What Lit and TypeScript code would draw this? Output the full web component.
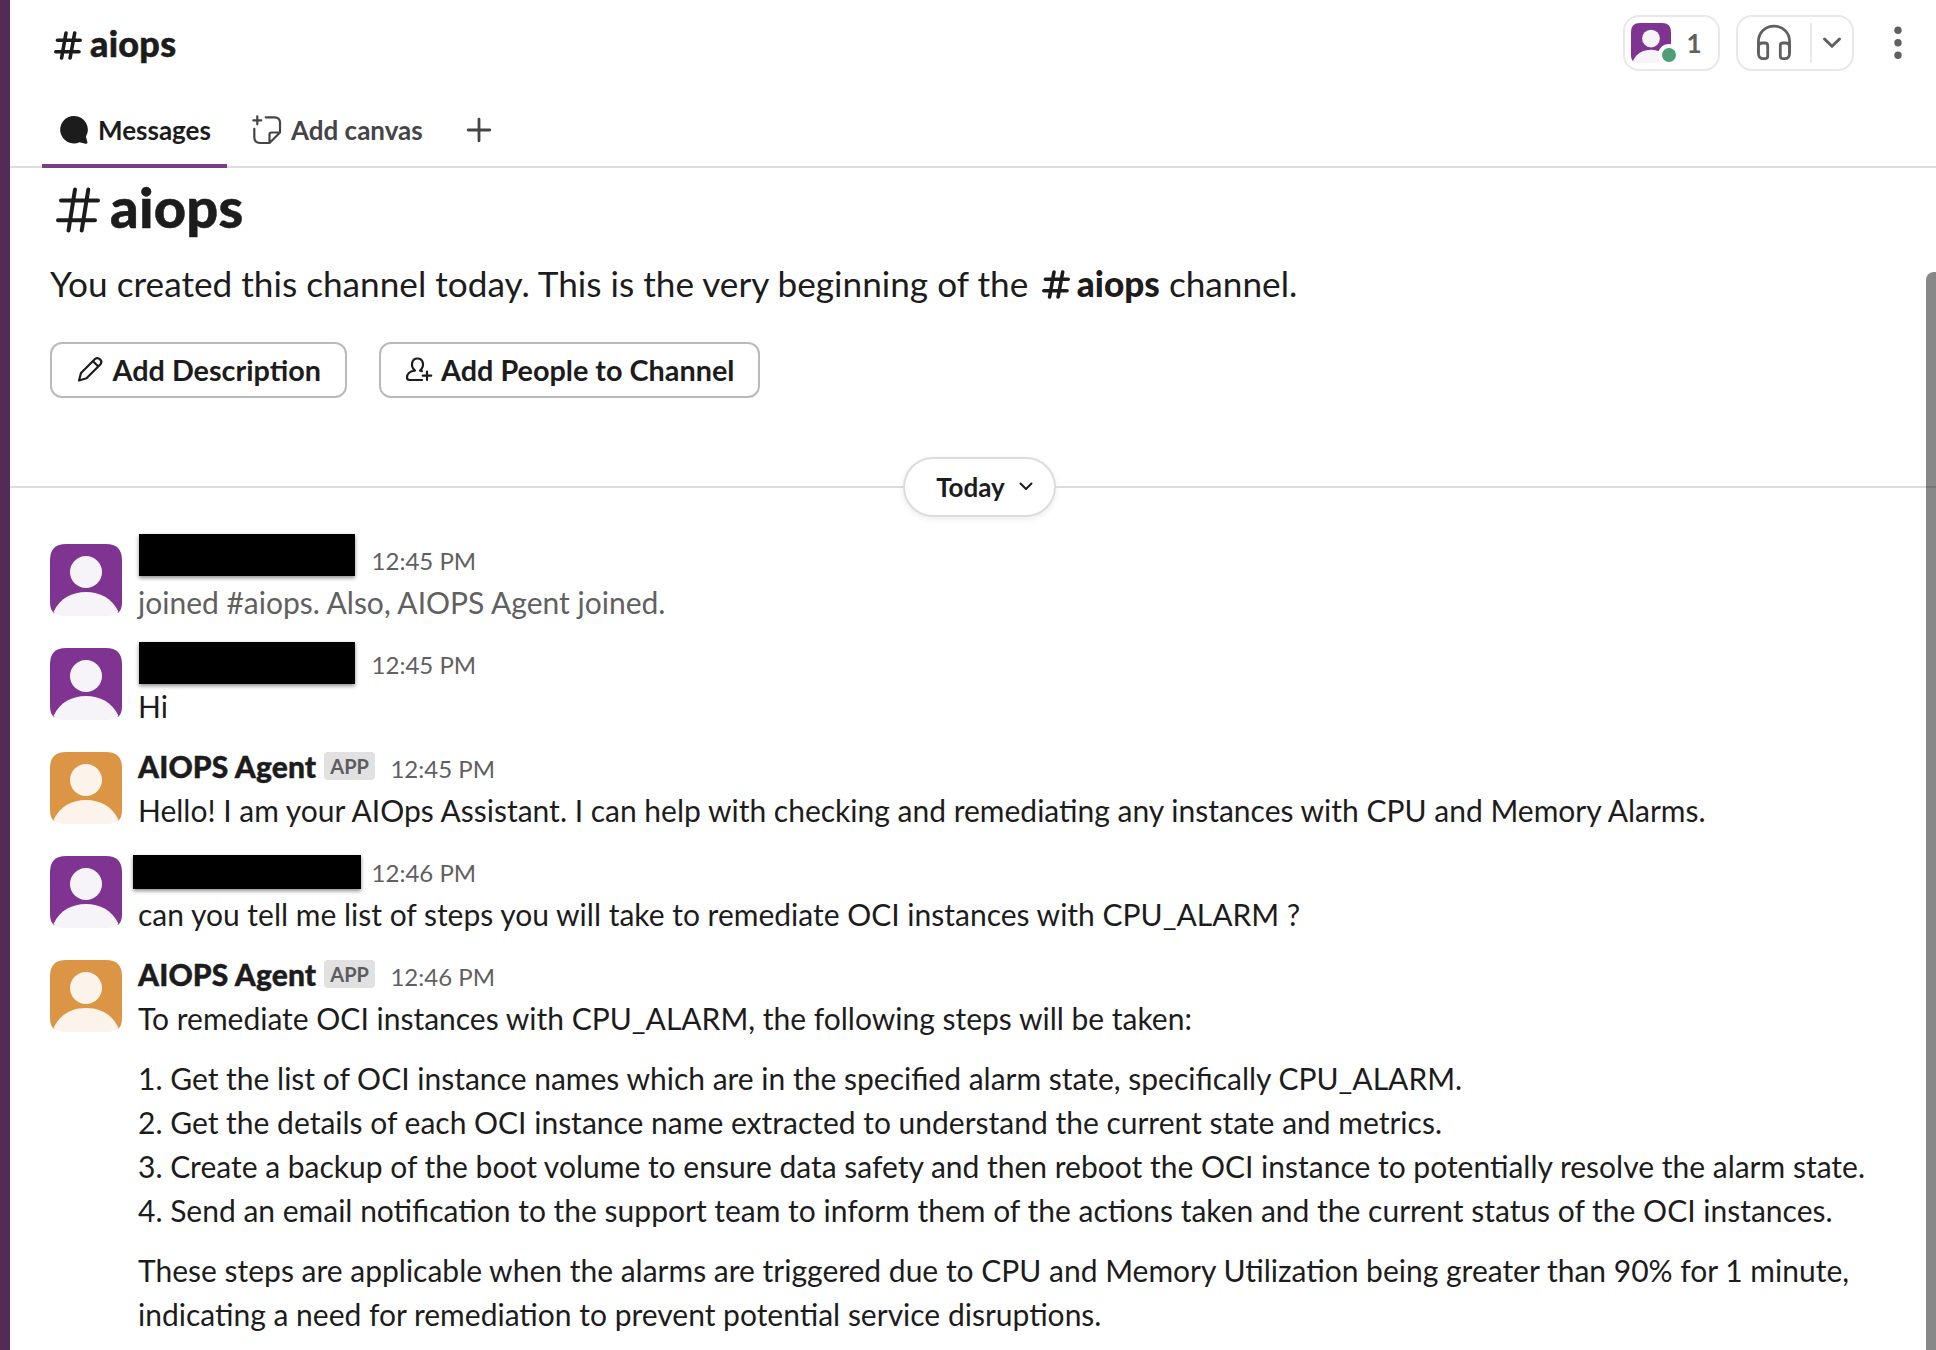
import { LitElement, html, css, nothing } from "lit";
import { customElement, property } from "lit/decorators.js";

const hashSmall = html`<svg width="28" height="29" viewBox="0 0 28 29" fill="none" stroke="currentColor" stroke-width="3.6" stroke-linecap="round"><path d="M12 2 L7.600 27 M20.700 2 L16.100 27 M3.400 9.300 H26.200 M1.800 20.700 H25"/></svg>`;
const hashBig = html`<svg width="48" height="46" viewBox="0 0 48 46" fill="none" stroke="currentColor" stroke-width="4" stroke-linecap="round"><path d="M21 2.500 L14.500 43.500 M34.300 2.500 L27.700 43.500 M7 13.500 H44 M4 33.200 H41"/></svg>`;

@customElement("user-avatar")
export class UserAvatar extends LitElement {
  @property() tone = "purple";
  static styles = css`
    :host { display: block; flex: none; }
    .pic { display: block; width: 100%; height: 100%; }
    .purple { color: #803492; --fg: #f6f3f9; }
    .orange { color: #dc9545; --fg: #fcf4ea; }
    .person { fill: var(--fg); }
  `;
  render() {
    return html`<svg class="pic ${this.tone}" viewBox="0 0 72 72">
      <path d="M0 58 V16 Q0 0 16 0 H56 Q72 0 72 16 V58 Q72 66 68 69 H4 Q0 66 0 58Z" fill="currentColor"/>
      <circle class="person" cx="36" cy="28" r="16"/>
      <path class="person" d="M3.5 68 C10 54 22 48 36 48 C50 48 62 54 68.5 68 Q64 72 56 72 H16 Q8 72 3.5 68Z"/>
    </svg>`;
  }
}

@customElement("chat-message")
export class ChatMessage extends LitElement {
  @property() name = "";
  @property() time = "";
  @property() tone = "purple";
  @property() mask = "";
  static styles = css`
    :host { display: flex; padding: 8px 40px; gap: 16px; }
    .avatar { width: 72px; height: 72px; margin-top: 8px; }
    .content { flex: 1; min-width: 0; position: relative; }
    .head { display: flex; align-items: baseline; height: 44px; line-height: 44px; white-space: nowrap; }
    .head::before { content: "\\200b"; font-size: 30px; }
    .name { font-weight: 900; font-size: 30px; letter-spacing: 0.13px; -webkit-text-stroke: 0.4px currentColor; }
    .badge { align-self: flex-start; margin: 8px 0 0 8px; height: 28px; line-height: 28px; padding: 0 6px; border-radius: 4px; background: #e1e1e1; color: #5c5c5f; font-size: 20px; font-weight: 700; }
    .time { font-size: 24px; color: #616061; margin-left: 15.5px; }
    .masked .time { margin-left: 233.6px; }
    .mask { position: absolute; background: #000; box-shadow: 0 2px 4px rgba(0,0,0,.45); }
    .a { left: 1px; top: -2px; width: 216px; height: 42px; }
    .b { left: 1px; top: 2px; width: 216px; height: 42px; }
    .c { left: -5px; top: 7px; width: 228px; height: 34px; }
  `;
  render() {
    return html`
      <user-avatar class="avatar" tone=${this.tone}></user-avatar>
      <div class="content">
        <div class="head ${this.name ? "" : "masked"}">
          ${this.name ? html`<span class="name">${this.name}</span><span class="badge">APP</span>` : nothing}
          <span class="time">${this.time}</span>
        </div>
        ${this.mask ? html`<div class="mask ${this.mask}"></div>` : nothing}
        <slot></slot>
      </div>`;
  }
}

@customElement("app-root")
export class AppRoot extends LitElement {
  static styles = css`
    :host { display: block; width: 1936px; height: 1350px; overflow: hidden; position: relative; background: #fff; color: #1d1c1d; font-family: Lato, "Liberation Sans", sans-serif; font-size: 30px; line-height: 44px; }
    * { box-sizing: border-box; }
    svg { display: block; flex: none; }
    .shell { display: flex; height: 1350px; }
    .rail { width: 10px; flex: none; background: #532b56; }
    .main { flex: 1; min-width: 0; }
    .header { height: 98px; padding: 15px 20px 0 44px; display: flex; align-items: flex-start; }
    .title { display: flex; align-items: center; height: 56px; gap: 8px; flex: 1; font-size: 36px; font-weight: 900; }
    .title svg { margin-top: 4px; }
    .black { font-weight: 900; letter-spacing: 0.25px; -webkit-text-stroke: 0.5px currentColor; }
    .pill { height: 56px; border: 2px solid #e8e8e8; border-radius: 16px; display: flex; align-items: center; color: #616061; }
    .members { width: 97px; padding-left: 6px; font-size: 26px; font-weight: 700; gap: 15.5px; margin-right: 16px; }
    .face { width: 40px; height: 40px; position: relative; }
    .mini { width: 40px; height: 40px; }
    .dot { position: absolute; left: 27px; top: 21px; width: 22px; height: 22px; border: 4px solid #fff; border-radius: 50%; background: #4e9f75; }
    .huddle { width: 118px; }
    .phones { margin-left: 16px; }
    .sep { width: 2px; height: 40px; background: #e8e8e8; margin-left: 16px; }
    .down { margin-left: 8px; }
    .more { margin: 10px 0 0 26px; color: #616061; }
    .tabs { height: 70px; border-bottom: 2px solid #dddddd; padding-left: 32px; display: flex; font-size: 26px; font-weight: 700; color: #454447; }
    .tab { height: 70px; padding: 0 16px 6px; display: flex; align-items: center; }
    .active { width: 185px; color: #1d1c1d; border-bottom: 4px solid #7a3b87; padding-bottom: 2px; }
    .label { margin-left: 8px; margin-top: -1px; }
    .canvas { margin-left: 8px; }
    .add { margin-left: 10px; }
    .intro { padding: 0 40px; height: 289px; display: flow-root; }
    .big { display: flex; align-items: center; height: 84px; margin-top: -4px; gap: 8px; font-size: 56px; line-height: 84px; }
    .big svg { margin: 8px 0 0 4px; }
    .big .black { position: relative; top: 1px; }
    .lead { margin: 11px 0 35px; height: 48px; line-height: 48px; font-size: 35.2px; white-space: nowrap; display: flex; }
    .chan { display: flex; align-items: center; gap: 7px; font-weight: 900; margin: 0 9px 0 13.5px; }
    .chan svg { margin-top: 3px; }
    .buttons { display: flex; gap: 32px; }
    .btn { height: 56px; border: 2px solid #bbbabb; border-radius: 12px; padding: 0 23.5px 1px 24px; display: flex; align-items: center; gap: 6.5px; font-weight: 700; font-size: 28.8px; white-space: nowrap; }
    .day { height: 60px; display: flex; align-items: center; }
    .rule { height: 2px; background: #dddddd; }
    .left { width: 893px; }
    .right { flex: 1; }
    .today { width: 153px; height: 60px; border: 2px solid #dcdcdc; border-radius: 30px; box-shadow: 0 2px 6px rgba(0,0,0,.08); display: flex; align-items: center; justify-content: center; gap: 14px; padding-left: 10px; font-size: 26px; font-weight: 700; flex: none; }
    .msgs { padding-top: 11px; }
    .line { white-space: nowrap; }
    .muted { color: #616061; }
    .para { margin-top: 16px; }
    .thumb { position: absolute; right: 0; top: 272px; width: 10px; height: 1078px; background: rgba(0,0,0,.467); border-top-left-radius: 8px; }
  `;
  render() {
    const steps = [
      "Get the list of OCI instance names which are in the specified alarm state, specifically CPU_ALARM.",
      "Get the details of each OCI instance name extracted to understand the current state and metrics.",
      "Create a backup of the boot volume to ensure data safety and then reboot the OCI instance to potentially resolve the alarm state.",
      "Send an email notification to the support team to inform them of the actions taken and the current status of the OCI instances.",
    ];
    return html`
      <div class="shell">
        <div class="rail"></div>
        <div class="main">
          <div class="header">
            <div class="title">${hashSmall}<span class="black">aiops</span></div>
            <div class="pill members">
              <div class="face"><user-avatar class="mini"></user-avatar><i class="dot"></i></div><span>1</span>
            </div>
            <div class="pill huddle">
              <svg class="phones" width="40" height="40" viewBox="0 0 40 40" fill="none" stroke="currentColor" stroke-width="2.8">
                <path d="M4.400 30 V18.700 C4.400 9.500 11.200 3.200 20 3.200 S35.600 9.500 35.600 18.700 V30"/>
                <path d="M4.400 24 Q4.400 20 8.400 20 H11 Q13.700 20 13.700 22.700 V33 Q13.700 35.700 11 35.700 H9.400 Q4.400 35.700 4.400 30Z"/>
                <path d="M35.600 24 Q35.600 20 31.600 20 H29 Q26.300 20 26.300 22.700 V33 Q26.300 35.700 29 35.700 H30.600 Q35.600 35.700 35.600 30Z"/>
              </svg>
              <div class="sep"></div>
              <svg class="down" width="24" height="24" viewBox="0 0 24 24" fill="none" stroke="currentColor" stroke-width="3" stroke-linecap="round" stroke-linejoin="round"><path d="M4.500 8 L12 15.300 L19.500 8"/></svg>
            </div>
            <svg class="more" width="36" height="36" viewBox="0 0 36 36" fill="currentColor"><circle cx="18" cy="5.300" r="3.700"/><circle cx="18" cy="17.800" r="3.700"/><circle cx="18" cy="30.300" r="3.700"/></svg>
          </div>
          <div class="tabs">
            <div class="tab active">
              <svg width="32" height="32" viewBox="0 0 32 32"><path d="M16 2 A13.700 13.700 0 1 0 21.500 28.200 L27.500 29.700 Q30 30 29.300 27.800 L27.900 22.600 A13.700 13.700 0 0 0 16 2Z" fill="currentColor"/></svg>
              <span class="label">Messages</span>
            </div>
            <div class="tab canvas">
              <svg width="32" height="32" viewBox="0 0 32 32" fill="none" stroke="currentColor" stroke-width="2.2" stroke-linecap="round" stroke-linejoin="round"><path d="M6.300 2.300 V10.300 M2.300 6.300 H10.300 M14.800 3.300 H23.500 Q29 3.300 29 8.800 V18.500 L18.500 29 H9 Q3.300 29 3.300 23.300 V14.800 M29 18.500 H20.500 Q18.500 18.500 18.500 20.500 V29"/></svg>
              <span class="label">Add canvas</span>
            </div>
            <div class="tab add">
              <svg width="28" height="28" viewBox="0 0 28 28" fill="none" stroke="currentColor" stroke-width="2.8" stroke-linecap="round"><path d="M14 3.200 V24.800 M3.200 14 H24.800"/></svg>
            </div>
          </div>
          <div class="intro">
            <div class="big">${hashBig}<span class="black">aiops</span></div>
            <div class="lead"><span>You created this channel today. This is the very beginning of the</span>
              <span class="chan">${hashSmall}<span>aiops</span></span><span>channel.</span></div>
            <div class="buttons">
              <div class="btn"><svg width="30" height="30" viewBox="0 0 30 30" fill="none" stroke="currentColor" stroke-width="2.200" stroke-linejoin="round"><path d="M3 25.500 L5 18 L19 4 Q21.500 2 24 4.300 Q26.500 6.800 24.500 9.300 L10.500 23.300Z M17 6.300 L22.300 11.500"/></svg><span>Add Description</span></div>
              <div class="btn"><svg width="30" height="30" viewBox="0 0 30 30" fill="none" stroke="currentColor" stroke-width="2.200" stroke-linecap="round" stroke-linejoin="round"><path d="M10 15.500 C4.500 16.500 2 19.500 2 22.500 Q2 25 4.500 25 H17 M10 15.500 C5 11.500 6.500 3.500 12.500 3.500 C18.500 3.500 20 11.500 15 15.500 L17 16.200 M22 16.500 V25 M17.800 20.700 H26.200"/></svg><span>Add People to Channel</span></div>
            </div>
          </div>
          <div class="day">
            <div class="rule left"></div>
            <div class="today"><span>Today</span><svg width="14" height="14" viewBox="0 0 14 14" fill="none" stroke="currentColor" stroke-width="2" stroke-linecap="round" stroke-linejoin="round"><path d="M1.500 3.500 L7 9 L12.500 3.500"/></svg></div>
            <div class="rule right"></div>
          </div>
          <div class="msgs">
            <chat-message time="12:45 PM" mask="a"><div class="line muted">joined #aiops. Also, AIOPS Agent joined.</div></chat-message>
            <chat-message time="12:45 PM" mask="b"><div class="line">Hi</div></chat-message>
            <chat-message name="AIOPS Agent" tone="orange" time="12:45 PM"><div class="line">Hello! I am your AIOps Assistant. I can help with checking and remediating any instances with CPU and Memory Alarms.</div></chat-message>
            <chat-message time="12:46 PM" mask="c"><div class="line">can you tell me list of steps you will take to remediate OCI instances with CPU_ALARM ?</div></chat-message>
            <chat-message name="AIOPS Agent" tone="orange" time="12:46 PM">
              <div class="line">To remediate OCI instances with CPU_ALARM, the following steps will be taken:</div>
              <div class="para">${steps.map((s, i) => html`<div class="line">${i + 1}. ${s}</div>`)}</div>
              <div class="para"><div class="line">These steps are applicable when the alarms are triggered due to CPU and Memory Utilization being greater than 90% for 1 minute,</div><div class="line">indicating a need for remediation to prevent potential service disruptions.</div></div>
            </chat-message>
          </div>
        </div>
      </div>
      <div class="thumb"></div>`;
  }
}
